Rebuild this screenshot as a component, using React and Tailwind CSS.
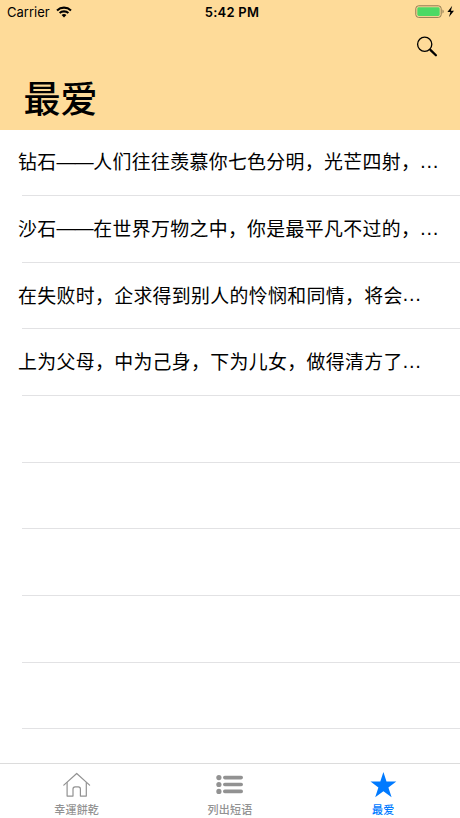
import React from 'react';

const phrases = [
  { id: 1, head: '钻石', dash: '——', text: '人们往往羡慕你七色分明，光芒四射，' },
  { id: 2, head: '沙石', dash: '——', text: '在世界万物之中，你是最平凡不过的，' },
  { id: 3, text: '在失败时，企求得到别人的怜悯和同情，将会' },
  { id: 4, text: '上为父母，中为己身，下为儿女，做得清方了' },
];

const emptyRows = [5, 6, 7, 8, 9];

const WifiIcon = () => (
  <svg width="16" height="12" viewBox="0 0 16 12" fill="none" stroke="#000" strokeWidth="2.1">
    <path d="M1 4.4C5 .7 11 .7 15 4.4" />
    <path d="M3.6 7.1c2.4-2.3 6.4-2.3 8.8 0" />
    <path d="M8 11.4 5.6 8.9c1.4-1.2 3.4-1.2 4.8 0z" fill="#000" stroke="none" />
  </svg>
);

const BatteryIcon = () => (
  <svg width="40" height="14" viewBox="0 0 40 14">
    <rect x=".8" y=".8" width="25.4" height="11.6" rx="2.8" fill="none" stroke="#8f7a52" strokeWidth="1" />
    <rect x="2.3" y="2.3" width="22.4" height="8.6" rx="1.4" fill="#4cd964" />
    <path d="M27.5 4.6c1.6.5 1.6 3.5 0 4z" fill="#8f7a52" />
    <path d="M37.2.8 32.4 7.1h3l-1.4 5L39 5.7h-3.1z" fill="#000" />
  </svg>
);

const SearchIcon = () => (
  <svg width="22" height="22" viewBox="0 0 22 22" fill="none" stroke="#000">
    <circle cx="8.7" cy="8.2" r="7.1" strokeWidth="1.3" />
    <path d="m13.7 13.2 1.3 1.3" strokeWidth="1.3" />
    <path d="m14.6 14.1 5.3 5.2" strokeWidth="2.3" strokeLinecap="round" />
  </svg>
);

const HomeIcon = () => (
  <svg width="28" height="26" viewBox="0 0 28 26" fill="none" stroke="#929292" strokeWidth="1.2" strokeLinejoin="round" strokeLinecap="round">
    <path d="M.8 13.1 13.7 1.5l12.9 11.6" />
    <path d="M4.1 10.6v13.5H10v-7c0-1.3.9-2.2 2.1-2.2h3.2c1.2 0 2.1.9 2.1 2.2v7h5.9V10.6" />
  </svg>
);

const ListIcon = () => (
  <svg width="28" height="26" viewBox="0 0 28 26" fill="#929292">
    <circle cx="2.9" cy="5.6" r="2.6" />
    <circle cx="2.9" cy="12.5" r="2.6" />
    <circle cx="2.9" cy="19.4" r="2.6" />
    <rect x="7" y="3.8" width="20" height="3.6" rx="1.8" />
    <rect x="7" y="10.7" width="20" height="3.6" rx="1.8" />
    <rect x="7" y="17.6" width="20" height="3.6" rx="1.8" />
  </svg>
);

const StarIcon = () => (
  <svg width="28" height="26" viewBox="0 0 28 26" fill="#007aff">
    <path d="m14.4 0 3.1 9.6h9.8l-7.9 5.9 3.2 9.8-8.2-6.1-8.2 6.1 3.2-9.8-7.9-5.9h9.8z" />
  </svg>
);

const tabs = [
  { label: '幸運餅乾', icon: <HomeIcon />, color: 'text-[#929292]' },
  { label: '列出短语', icon: <ListIcon />, color: 'text-[#929292]' },
  { label: '最爱', icon: <StarIcon />, color: 'text-[#007aff]' },
];

const App = () => {
  return (
    <div className="flex h-[818px] w-[460px] flex-col overflow-hidden bg-white font-['Inter','Noto_Sans_CJK_SC',sans-serif] text-black">
      <header className="flex h-[130px] shrink-0 flex-col bg-[#fedb99]">
        {/* Status bar */}
        <div className="grid h-6 shrink-0 grid-cols-3 items-center pl-[7px] pr-[5px]">
          <div className="flex items-center gap-1.5">
            <span className="text-[13px] leading-6">Carrier</span>
            <WifiIcon />
          </div>
          <span className="pl-0.5 text-center text-[13px] font-semibold leading-6 tracking-[0.25px]">5:42 PM</span>
          <div className="flex justify-end">
            <BatteryIcon />
          </div>
        </div>

        <div className="flex h-11 shrink-0 items-center justify-end pr-[22px] pt-0.5">
          <SearchIcon />
        </div>

        <h1 className="pl-[23.5px] font-['Noto_Sans_CJK_SC',sans-serif] text-[37px] font-medium leading-[58px]">最爱</h1>
      </header>

      <main className="min-h-0 flex-1 overflow-hidden font-['Noto_Sans_CJK_SC',sans-serif] text-[18.9px] tracking-[0.34px]">
        {phrases.map((phrase) => (
          <div key={phrase.id} className="h-[66.67px]">
            <div className="flex h-[65px] items-center whitespace-nowrap pb-0.5 pl-[18px]">
              {phrase.head && <span>{phrase.head}</span>}
              {phrase.dash && (
                <span className="w-[36.8px] pt-px font-['Liberation_Sans',sans-serif] tracking-[-0.6px]">{phrase.dash}</span>
              )}
              <span>{phrase.text}</span>
              <span className="-ml-px pb-px font-['Liberation_Sans',sans-serif] text-[20px]">…</span>
            </div>
            <div className="ml-[22px] h-px bg-[#e2e2e4]" />
          </div>
        ))}
        {emptyRows.map((row) => (
          <div key={row} className="h-[66.67px] pt-[65px]">
            <div className="ml-[22px] h-px bg-[#e2e2e4]" />
          </div>
        ))}
      </main>

      <nav className="grid h-[55px] shrink-0 grid-cols-3 border-t border-[#dcdcdc] bg-white">
        {tabs.map((tab) => (
          <div key={tab.label} className={`flex flex-col items-center pt-2 ${tab.color}`}>
            {tab.icon}
            <span className="mt-[3px] font-['Noto_Sans_CJK_SC',sans-serif] text-[11px] font-medium leading-4 tracking-[0.2px]">
              {tab.label}
            </span>
          </div>
        ))}
      </nav>
    </div>
  );
};

export default App;
